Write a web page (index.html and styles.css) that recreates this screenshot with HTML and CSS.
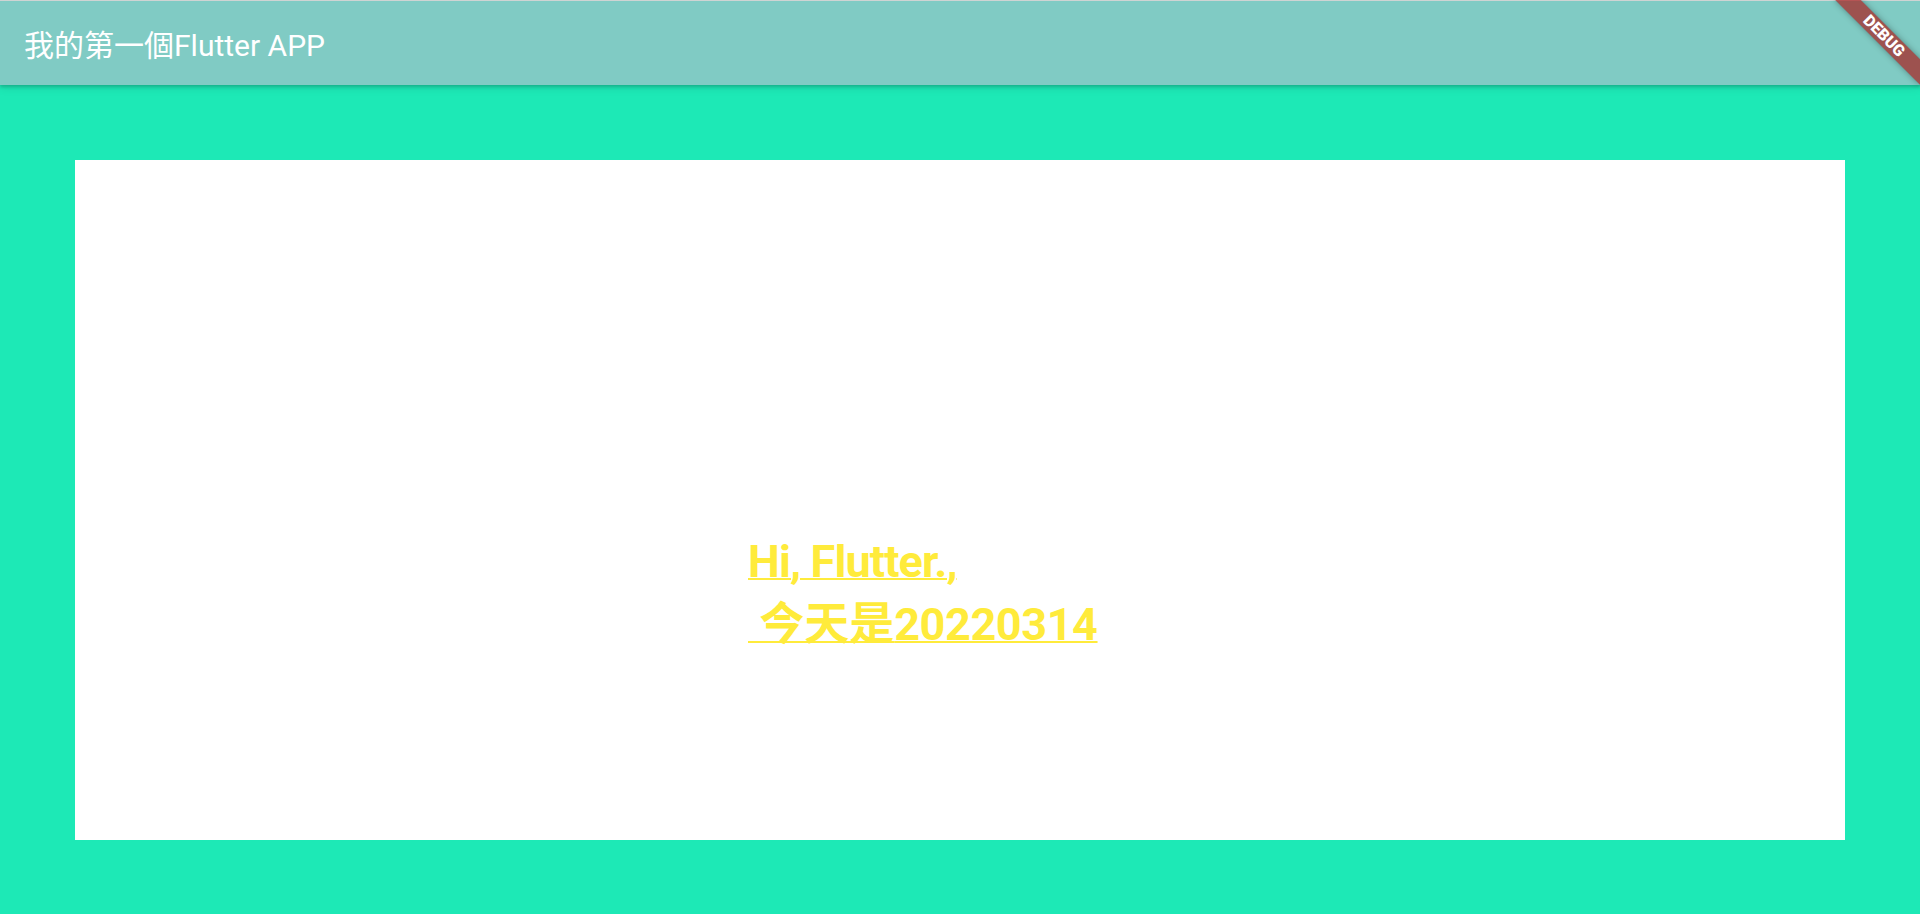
FILE: index.html
```html
<!DOCTYPE html>
<html lang="zh-Hant">
<head>
<meta charset="utf-8">
<title>我的第一個Flutter APP</title>
<link rel="stylesheet" href="styles.css">
</head>
<body>
<div class="app">
  <header class="appbar">
    <div class="title">我的第一個Flutter APP</div>
  </header>
  <main class="content">
    <div class="card">
      <div class="message">
        <span class="line line1">Hi, Flutter.,</span>
        <span class="line line2"> 今天是<span class="digits">20220314</span></span>
      </div>
    </div>
  </main>
  <div class="topline"></div>
  <div class="banner-clip">
    <div class="banner">DEBUG</div>
  </div>
</div>
</body>
</html>
```

FILE: styles.css
```css
html, body {
  margin: 0;
  padding: 0;
  width: 1920px;
  height: 914px;
  overflow: hidden;
}

body {
  font-family: Roboto, "Noto Sans CJK TC", "Noto Sans", sans-serif;
  background: #1de9b6;
}

.app {
  position: relative;
  width: 1920px;
  height: 914px;
  display: flex;
  flex-direction: column;
}

.appbar {
  position: relative;
  z-index: 2;
  height: 85px;
  box-sizing: border-box;
  padding: 28px 24px 0 24px;
  background: #80cbc4;
  box-shadow: 0 2px 3px rgba(0, 0, 0, 0.18), 0 4px 8px rgba(0, 0, 0, 0.08);
  flex: none;
}

.title {
  color: #ffffff;
  font-size: 30px;
  line-height: 35px;
  font-weight: 400;
  white-space: nowrap;
}

.content {
  flex: 1;
  box-sizing: border-box;
  padding: 75px 75px 74px 75px;
  display: flex;
}

.card {
  flex: 1;
  background: #ffffff;
  box-sizing: border-box;
  padding: 375px 0 0 673px;
}

.message {
  color: #ffeb3b;
  font-size: 45px;
  font-weight: 700;
}

.line {
  display: block;
  white-space: pre;
  text-decoration: underline;
  text-decoration-thickness: 2px;
  line-height: 53px;
}

.line1 {
  letter-spacing: -0.85px;
}

.line2 {
  margin-top: 10px;
}

.digits {
  letter-spacing: -0.4px;
}

.topline {
  position: absolute;
  z-index: 3;
  left: 0;
  top: 0;
  width: 1920px;
  height: 1px;
  background: #cfd4d3;
}

.banner-clip {
  position: absolute;
  z-index: 4;
  top: 0;
  right: 0;
  width: 120px;
  height: 120px;
  overflow: hidden;
}

.banner {
  position: absolute;
  left: 24px;
  top: 27px;
  width: 120px;
  height: 18px;
  transform: rotate(45deg);
  background: rgba(170, 30, 30, 0.7);
  box-shadow: 0 0 6px rgba(0, 0, 0, 0.35);
  color: #ffffff;
  font-family: Roboto, "Liberation Sans", sans-serif;
  font-size: 16px;
  font-weight: 900;
  line-height: 18px;
  text-align: center;
  letter-spacing: 0;
}
```
